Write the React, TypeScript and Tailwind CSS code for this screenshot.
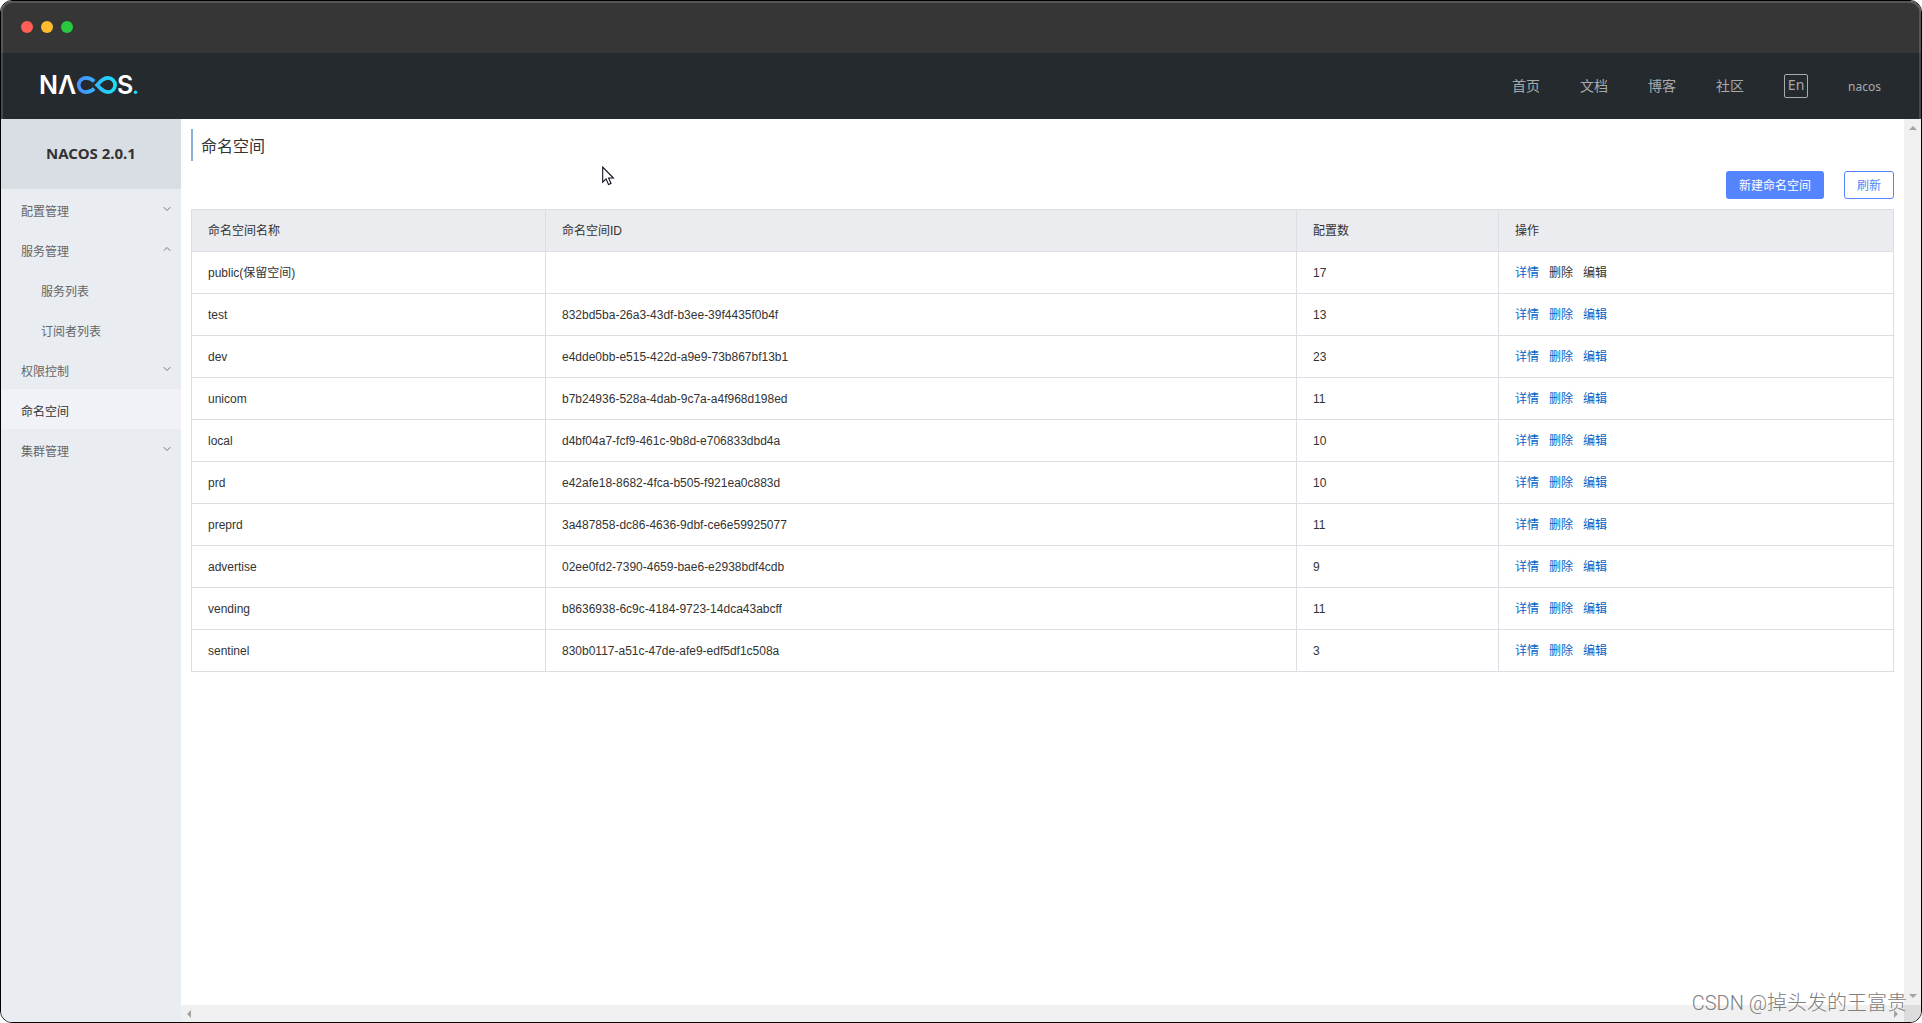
import { ChevronDown, ChevronUp } from 'lucide-react';

type Namespace = { name: string; id: string; count: number; reserved?: boolean };

const namespaces: Namespace[] = [
  { name: 'public(保留空间)', id: '', count: 17, reserved: true },
  { name: 'test', id: '832bd5ba-26a3-43df-b3ee-39f4435f0b4f', count: 13 },
  { name: 'dev', id: 'e4dde0bb-e515-422d-a9e9-73b867bf13b1', count: 23 },
  { name: 'unicom', id: 'b7b24936-528a-4dab-9c7a-a4f968d198ed', count: 11 },
  { name: 'local', id: 'd4bf04a7-fcf9-461c-9b8d-e706833dbd4a', count: 10 },
  { name: 'prd', id: 'e42afe18-8682-4fca-b505-f921ea0c883d', count: 10 },
  { name: 'preprd', id: '3a487858-dc86-4636-9dbf-ce6e59925077', count: 11 },
  { name: 'advertise', id: '02ee0fd2-7390-4659-bae6-e2938bdf4cdb', count: 9 },
  { name: 'vending', id: 'b8636938-6c9c-4184-9723-14dca43abcff', count: 11 },
  { name: 'sentinel', id: '830b0117-a51c-47de-afe9-edf5df1c508a', count: 3 },
];

type Item = { label: string; arrow?: 'up' | 'down'; child?: boolean; active?: boolean };

const menu: Item[] = [
  { label: '配置管理', arrow: 'down' },
  { label: '服务管理', arrow: 'up' },
  { label: '服务列表', child: true },
  { label: '订阅者列表', child: true },
  { label: '权限控制', arrow: 'down' },
  { label: '命名空间', active: true },
  { label: '集群管理', arrow: 'down' },
];

const columns = ['命名空间名称', '命名空间ID', '配置数', '操作'];

function Logo() {
  return (
    <svg width="104" height="32" viewBox="-3 -6 104 32" aria-label="NACOS">
      <defs>
        <linearGradient id="loop" gradientUnits="userSpaceOnUse" x1="36" y1="0" x2="76" y2="0">
          <stop offset="0" stopColor="#4a8cff" />
          <stop offset="1" stopColor="#18e4f6" />
        </linearGradient>
      </defs>
      <g fill="#fff" fontFamily="Inter, sans-serif" fontWeight="600" fontSize="25">
        <text x="-2" y="18">N</text>
        <text x="17" y="18">Λ</text>
        <text x="76" y="18">S</text>
      </g>
      <path
        d="M53.2 5.4 C51 3.2 48.5 1.9 44.8 1.9 A7.1 7.1 0 0 0 44.8 16.1 C48.5 16.1 51 14.8 53.2 12.6"
        fill="none"
        stroke="url(#loop)"
        strokeWidth="3.7"
      />
      <path
        d="M56 9 C59.5 5.2 62.5 1.9 67 1.9 A7.1 7.1 0 0 1 67 16.1 C62.5 16.1 59.5 12.8 56 9 Z"
        fill="none"
        stroke="url(#loop)"
        strokeWidth="3.7"
      />
      <circle cx="94.5" cy="16.3" r="1.7" fill="#18e4f6" />
    </svg>
  );
}

function TopBar() {
  return (
    <>
      <div className="flex h-[52px] shrink-0 items-center gap-2 rounded-t-[11px] border-2 border-b-0 border-[#555] bg-[#363636] pb-[2px] pl-[18px]">
        <span className="size-3 rounded-full bg-[#ff5f57]" />
        <span className="size-3 rounded-full bg-[#febc2e]" />
        <span className="size-3 rounded-full bg-[#28c840]" />
      </div>
      <header className="flex h-[66px] shrink-0 items-center justify-between border-x-2 border-[#45494b] bg-[#252a2f] pr-[38px] pl-[35px]">
        <a href="#home">
          <Logo />
        </a>
        <nav className="flex items-center gap-10 text-sm text-[#a8aaac]">
          <a href="#index" className="pb-[2px]">首页</a>
          <a href="#docs" className="pb-[2px]">文档</a>
          <a href="#blog" className="pb-[2px]">博客</a>
          <a href="#community" className="pb-[2px]">社区</a>
          <button className="flex size-6 items-center justify-center rounded-xs border border-[#a8aaac] pb-[2px] font-['Noto_Sans',sans-serif] text-sm leading-none">
            En
          </button>
          <a href="#user" className="pt-[2px] font-['Noto_Sans','Noto_Sans_CJK_SC',sans-serif] text-xs">
            nacos
          </a>
        </nav>
      </header>
    </>
  );
}

function Sidebar() {
  return (
    <aside className="w-[180px] shrink-0 bg-[#e9edf2]">
      <h1 className="flex h-[70px] items-center justify-center bg-[#d9dde4] pb-[2px] font-['Noto_Sans',sans-serif] text-[15px] font-bold text-[#333]">
        NACOS 2.0.1
      </h1>
      <ul>
        {menu.map((m) => (
          <li key={m.label}>
            <a
              href="#menu"
              className={
                'flex h-10 items-center justify-between pt-1 pr-2 ' +
                (m.child ? 'pl-10 ' : 'pl-5 ') +
                (m.active ? 'bg-[#f1f2f7] text-[#333]' : 'text-[#666]')
              }
            >
              {m.label}
              {m.arrow === 'down' && <ChevronDown className="mb-1 size-3 text-[#777]" strokeWidth={2} />}
              {m.arrow === 'up' && <ChevronUp className="mb-1 size-3 text-[#777]" strokeWidth={2} />}
            </a>
          </li>
        ))}
      </ul>
    </aside>
  );
}

function NamespaceTable() {
  return (
    <table className="w-full table-fixed border-collapse text-left font-['Liberation_Sans','Noto_Sans_CJK_SC',sans-serif] text-[#333]">
      <colgroup>
        <col className="w-[354px]" />
        <col />
        <col className="w-[202px]" />
        <col className="w-[395px]" />
      </colgroup>
      <thead>
        <tr className="h-[42px] bg-[#ebecf0]">
          {columns.map((c) => (
            <th key={c} className="border border-[#dcdee3] px-4 font-normal">
              {c}
            </th>
          ))}
        </tr>
      </thead>
      <tbody>
        {namespaces.map((n) => (
          <tr key={n.name} className="h-[42px]">
            <td className="border border-[#dcdee3] px-4">{n.name}</td>
            <td className="border border-[#dcdee3] px-4">{n.id}</td>
            <td className="border border-[#dcdee3] px-4">{n.count}</td>
            <td className="border border-[#dcdee3] px-4">
              <div className="flex gap-[10px] text-[#0064c8]">
                <a href="#detail">详情</a>
                <a href="#delete" className={n.reserved ? 'text-[#333]' : ''}>
                  删除
                </a>
                <a href="#edit" className={n.reserved ? 'text-[#333]' : ''}>
                  编辑
                </a>
              </div>
            </td>
          </tr>
        ))}
      </tbody>
    </table>
  );
}

function Arrow({ className }: { className: string }) {
  return (
    <svg width="8" height="4" viewBox="0 0 8 4" className={className}>
      <path d="M0 4 4 0 8 4Z" fill="#a3a3a3" />
    </svg>
  );
}

export default function App() {
  return (
    <div className="relative flex h-screen flex-col overflow-hidden rounded-xl border border-black bg-white font-['Noto_Sans_CJK_SC',sans-serif] text-xs">
      <TopBar />
      <div className="flex min-h-0 flex-1">
        <Sidebar />
        <div className="flex min-w-0 flex-1 flex-col">
          <div className="flex min-h-0 flex-1">
            <main className="min-w-0 flex-1 p-[10px]">
              <h2 className="h-8 border-l-2 border-[#86b4dc] pl-2 text-base leading-8 text-[#333]">命名空间</h2>
              <div className="flex justify-end gap-5 py-[10px]">
                <button className="h-7 rounded-[3px] bg-[#5584ff] px-[13px] text-white">新建命名空间</button>
                <button className="h-7 rounded-[3px] border border-[#5584ff] px-3 text-[#5584ff]">刷新</button>
              </div>
              <NamespaceTable />
            </main>
            <div className="flex w-[17px] flex-col items-center justify-between bg-[#f0f0f0] py-[7px]">
              <Arrow className="" />
              <Arrow className="rotate-180" />
            </div>
          </div>
          <div className="flex h-[17px]">
            <div className="flex flex-1 items-center justify-between bg-[#f0f0f0] px-1">
              <Arrow className="-rotate-90" />
              <Arrow className="rotate-90" />
            </div>
            <div className="w-[17px] bg-[#dcdcdc]" />
          </div>
        </div>
      </div>
      <svg width="13" height="20" viewBox="0 0 13 20" className="absolute top-[165px] left-[601px]">
        <path
          d="M.7 1v15.2l3.4-3.3 2.4 5.6 2.5-1-2.4-5.5h4.8Z"
          fill="#fff"
          stroke="#112"
          strokeWidth="1.1"
        />
      </svg>
      <p className="absolute right-[14px] bottom-[3px] font-['Roboto','Noto_Sans_CJK_SC',sans-serif] text-xl leading-8 font-light text-[#808080]">
        CSDN @掉头发的王富贵
      </p>
    </div>
  );
}
